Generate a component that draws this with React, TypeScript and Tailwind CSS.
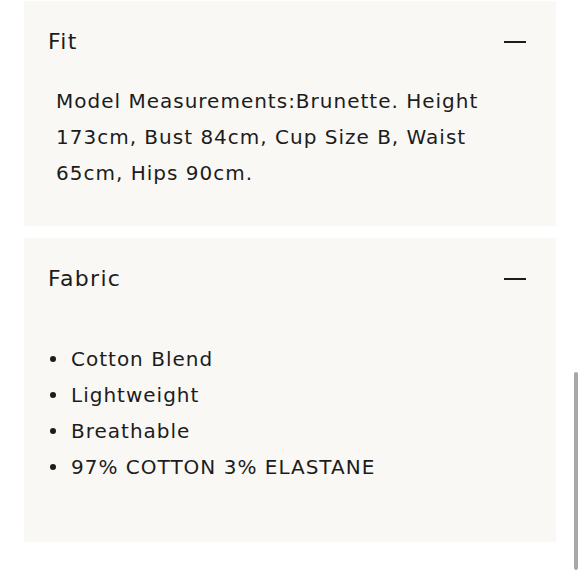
export default function App() {
  const fabric = ["Cotton Blend", "Lightweight", "Breathable", "97% COTTON 3% ELASTANE"];

  return (
    <div
      className="relative h-[580px] w-[580px] overflow-hidden bg-white text-[#1c1c1c]"
      style={{ fontFamily: '"DejaVu Sans", "Noto Sans", sans-serif' }}
    >
      <div className="flex flex-col gap-3 pl-6 pr-6 pt-px">
        {/* Fit */}
        <section className="bg-[#faf8f5] pl-6 pr-[30px] pt-[26px] pb-[35px]">
          <div className="flex items-center justify-between">
            <h3 className="text-[22px] leading-[30px] tracking-[0.06em]">Fit</h3>
            <span className="block h-[1.5px] w-[22px] bg-[#1c1c1c]" />
          </div>
          <p className="mt-[26px] w-[460px] pl-2 text-[20px] leading-9 tracking-[0.05em]">
            Model Measurements:Brunette. Height 173cm, Bust 84cm, Cup Size B, Waist 65cm, Hips 90cm.
          </p>
        </section>

        {/* Fabric */}
        <section className="bg-[#faf8f5] pl-6 pr-[30px] pt-[26px] pb-[57px]">
          <div className="flex items-center justify-between">
            <h3 className="text-[22px] leading-[30px] tracking-[0.06em]">Fabric</h3>
            <span className="block h-[1.5px] w-[22px] bg-[#1c1c1c]" />
          </div>
          <ul className="mt-[47px] text-[20px] leading-9 tracking-[0.05em]">
            {fabric.map((item) => (
              <li key={item} className="flex items-center">
                <span className="ml-[2px] mr-[15px] block h-[6px] w-[6px] rounded-full bg-[#1c1c1c]" />
                {item}
              </li>
            ))}
          </ul>
        </section>
      </div>

      {/* overlay scrollbar */}
      <div className="absolute right-[2px] top-[372px] h-[198px] w-[4px] rounded-full bg-[#a8a8a8]" />
    </div>
  );
}
